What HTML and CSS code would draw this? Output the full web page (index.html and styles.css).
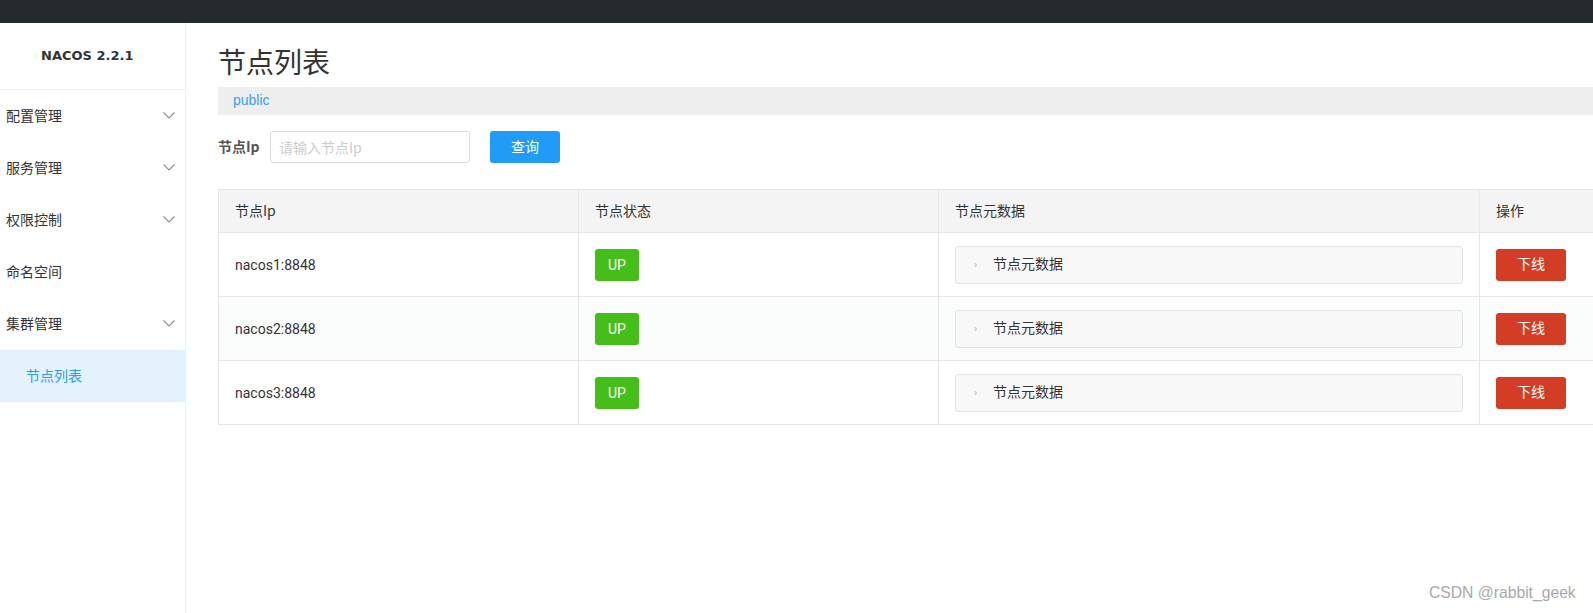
FILE: index.html
```html
<!DOCTYPE html>
<html lang="zh-CN">
<head>
<meta charset="utf-8">
<title>NACOS 2.2.1</title>
<link rel="stylesheet" href="styles.css">
</head>
<body>
<div class="topbar"></div>
<div class="layout">
  <aside class="sidebar">
    <div class="brand">NACOS 2.2.1</div>
    <ul class="menu">
      <li class="menu-item"><span>配置管理</span><svg class="chev" width="12" height="7" viewBox="0 0 12 7"><polyline points="0.5,0.5 6,6 11.5,0.5" fill="none" stroke="#8c8c8c" stroke-width="1.1"/></svg></li>
      <li class="menu-item"><span>服务管理</span><svg class="chev" width="12" height="7" viewBox="0 0 12 7"><polyline points="0.5,0.5 6,6 11.5,0.5" fill="none" stroke="#8c8c8c" stroke-width="1.1"/></svg></li>
      <li class="menu-item"><span>权限控制</span><svg class="chev" width="12" height="7" viewBox="0 0 12 7"><polyline points="0.5,0.5 6,6 11.5,0.5" fill="none" stroke="#8c8c8c" stroke-width="1.1"/></svg></li>
      <li class="menu-item"><span>命名空间</span></li>
      <li class="menu-item"><span>集群管理</span><svg class="chev" width="12" height="7" viewBox="0 0 12 7"><polyline points="0.5,0.5 6,6 11.5,0.5" fill="none" stroke="#8c8c8c" stroke-width="1.1"/></svg></li>
      <li class="menu-item sub active"><span>节点列表</span></li>
    </ul>
  </aside>
  <main class="main">
    <h1 class="title">节点列表</h1>
    <div class="ns-bar"><span class="ns">public</span></div>
    <div class="search">
      <label class="search-label">节点Ip</label>
      <input class="search-input" type="text" placeholder="请输入节点Ip">
      <button class="btn-primary">查询</button>
    </div>
    <table class="grid">
      <colgroup>
        <col class="c1"><col class="c2"><col class="c3"><col class="c4">
      </colgroup>
      <thead>
        <tr><th>节点Ip</th><th>节点状态</th><th>节点元数据</th><th>操作</th></tr>
      </thead>
      <tbody>
        <tr>
          <td>nacos1:8848</td>
          <td><span class="tag-up">UP</span></td>
          <td><div class="collapse"><span class="arrow">›</span><span>节点元数据</span></div></td>
          <td><button class="btn-danger">下线</button></td>
        </tr>
        <tr class="alt">
          <td>nacos2:8848</td>
          <td><span class="tag-up">UP</span></td>
          <td><div class="collapse"><span class="arrow">›</span><span>节点元数据</span></div></td>
          <td><button class="btn-danger">下线</button></td>
        </tr>
        <tr>
          <td>nacos3:8848</td>
          <td><span class="tag-up">UP</span></td>
          <td><div class="collapse"><span class="arrow">›</span><span>节点元数据</span></div></td>
          <td><button class="btn-danger">下线</button></td>
        </tr>
      </tbody>
    </table>
  </main>
</div>
<div class="watermark">CSDN @rabbit_geek</div>
</body>
</html>
```
FILE: styles.css
```css
* { box-sizing: border-box; }
html, body {
  margin: 0;
  padding: 0;
  height: 613px;
  overflow: hidden;
  background: #fff;
  font-family: Roboto, "Noto Sans CJK SC", sans-serif;
  font-size: 14px;
  color: #333;
}
.topbar {
  height: 23px;
  background: #252a2f;
}
.layout {
  display: flex;
  height: 590px;
}
.sidebar {
  width: 186px;
  flex: none;
  border-right: 1px solid #eee;
}
.brand {
  height: 67px;
  border-bottom: 1px solid #eee;
  padding-left: 41px;
  line-height: 66px;
  font-family: "DejaVu Sans", sans-serif;
  font-weight: bold;
  font-size: 13px;
  color: #333;
}
.menu {
  list-style: none;
  margin: 0;
  padding: 0;
}
.menu-item {
  height: 52px;
  display: flex;
  align-items: center;
  justify-content: space-between;
  padding: 0 10px 3px 6px;
  font-family: "Noto Sans CJK SC", sans-serif;
  font-size: 14px;
  color: #333;
}
.chev { display: block; margin-top: 1px; }
.menu-item.sub { padding-left: 26px; }
.menu-item.active {
  background: #e3f2fd;
  color: #2d9cf5;
}
.main {
  flex: 1;
  min-width: 0;
  overflow: hidden;
  padding-left: 32px;
}
.title {
  margin: 0;
  padding-top: 18px;
  height: 64px;
  line-height: 40px;
  font-size: 28px;
  font-weight: normal;
  font-family: "Noto Sans CJK SC", sans-serif;
  color: #333;
}
.ns-bar {
  height: 28px;
  background: #eee;
  padding-left: 15px;
  line-height: 27px;
}
.ns {
  color: #3d9df2;
  font-family: "Liberation Sans", "Noto Sans CJK SC", sans-serif;
  font-size: 14px;
}
.search {
  display: flex;
  align-items: center;
  margin-top: 16px;
  height: 32px;
}
.search-label {
  font-family: "Noto Sans CJK SC", sans-serif;
  font-weight: bold;
  font-size: 14px;
  color: #555;
  width: 52px;
  padding-bottom: 2px;
}
.search-input {
  width: 200px;
  height: 32px;
  border: 1px solid #dcdcdc;
  border-radius: 3px;
  padding: 0 8px;
  font-family: "Noto Sans CJK SC", sans-serif;
  font-size: 14px;
  outline: none;
}
.search-input::placeholder { color: #ccc; }
.btn-primary {
  margin-left: 20px;
  width: 70px;
  height: 32px;
  border: none;
  border-radius: 3px;
  background: #209bf6;
  color: #fff;
  font-family: "Noto Sans CJK SC", sans-serif;
  font-size: 14px;
  padding: 0 0 2px;
}
.grid {
  margin-top: 26px;
  border-collapse: collapse;
  table-layout: fixed;
  width: 1402px;
}
.grid col.c1 { width: 360px; }
.grid col.c2 { width: 360px; }
.grid col.c3 { width: 541px; }
.grid col.c4 { width: 141px; }
.grid th, .grid td {
  border: 1px solid #e6e6e6;
  padding: 0 16px;
  text-align: left;
  font-weight: normal;
  font-size: 14px;
  color: #333;
}
.grid th {
  height: 43px;
  background: #f4f4f4;
  font-family: "Noto Sans CJK SC", sans-serif;
  padding-bottom: 2px;
}
.grid td { height: 64px; }
.grid tr.alt td { background: #fbfdfc; }
.tag-up {
  display: inline-block;
  width: 44px;
  height: 32px;
  line-height: 32px;
  text-align: center;
  border-radius: 3px;
  background: #46be19;
  color: #fff;
  font-size: 14px;
}
.collapse {
  height: 38px;
  border: 1px solid #e3e3e3;
  border-radius: 3px;
  background: #f8f8f8;
  display: flex;
  align-items: center;
  padding-left: 18px;
  padding-bottom: 3px;
  font-family: "Noto Sans CJK SC", sans-serif;
}
.arrow {
  color: #aaa;
  font-size: 10px;
  width: 19px;
}
.btn-danger {
  width: 70px;
  height: 32px;
  border: none;
  border-radius: 3px;
  background: #d33d26;
  color: #fff;
  font-family: "Noto Sans CJK SC", sans-serif;
  font-size: 14px;
  padding: 0 0 3px;
}
.watermark {
  position: absolute;
  left: 1429px;
  top: 584px;
  font-family: "Liberation Sans", sans-serif;
  font-size: 15.7px;
  color: #a9a9a9;
}
```
